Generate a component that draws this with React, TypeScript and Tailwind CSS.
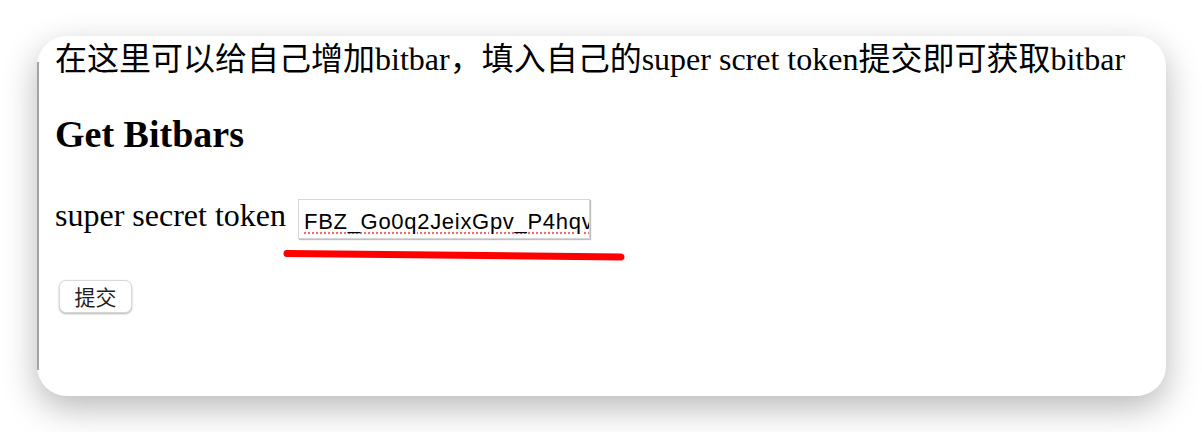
export default function App() {
  const serif = "font-['Liberation_Serif','Noto_Sans_CJK_SC',serif]";
  return (
    <div className="w-[1202px] h-[432px] bg-white pt-[36px] pl-[37px] overflow-hidden">
      <div className="relative flex w-[1129px] h-[360px] rounded-[30px] bg-white shadow-[0_12px_34px_rgba(0,0,0,0.28)]">
        {/* window edge */}
        <div className="w-[2px] my-[26px] bg-[#a3a3a3]" />
        <div className={`pl-[16px] text-black ${serif}`}>
          <p className="text-[32px] leading-[46px] whitespace-nowrap">
            在这里可以给自己增加bitbar，填入自己的super scret token提交即可获取bitbar
          </p>
          <h3 className="mt-[30px] text-[38px] leading-[44px] font-bold">Get Bitbars</h3>
          <div className="mt-[43px] flex items-start">
            <label className="text-[32px] leading-[32px] whitespace-nowrap">super secret token</label>
            <input
              readOnly
              spellCheck={false}
              value="FBZ_Go0q2JeixGpv_P4hqv"
              className="ml-[12px] w-[292px] h-[40px] box-border border border-[#d6d6d6] pl-[5px] pr-0 pt-[5px] bg-white text-[22px] tracking-[0.7px] text-black font-['Liberation_Sans',sans-serif] outline-none shadow-[1px_1px_1px_rgba(0,0,0,0.25)] underline decoration-dotted decoration-[#f07070] underline-offset-[4px]"
            />
          </div>
          <button className="mt-[41px] ml-[4px] w-[73px] h-[33px] rounded-[7px] border border-[#d9d9d9] bg-white shadow-[0_1px_2px_rgba(0,0,0,0.3)] text-[21px] leading-none text-[#1f1f1f] font-['Noto_Sans_CJK_SC',sans-serif]">
            提交
          </button>
        </div>
        {/* red annotation stroke */}
        <svg className="absolute left-[244px] top-[212px]" width="350" height="16" viewBox="0 0 350 16">
          <path d="M6 5.5 L340 9" stroke="#ff0000" strokeWidth="7" strokeLinecap="round" fill="none" />
        </svg>
      </div>
    </div>
  );
}
